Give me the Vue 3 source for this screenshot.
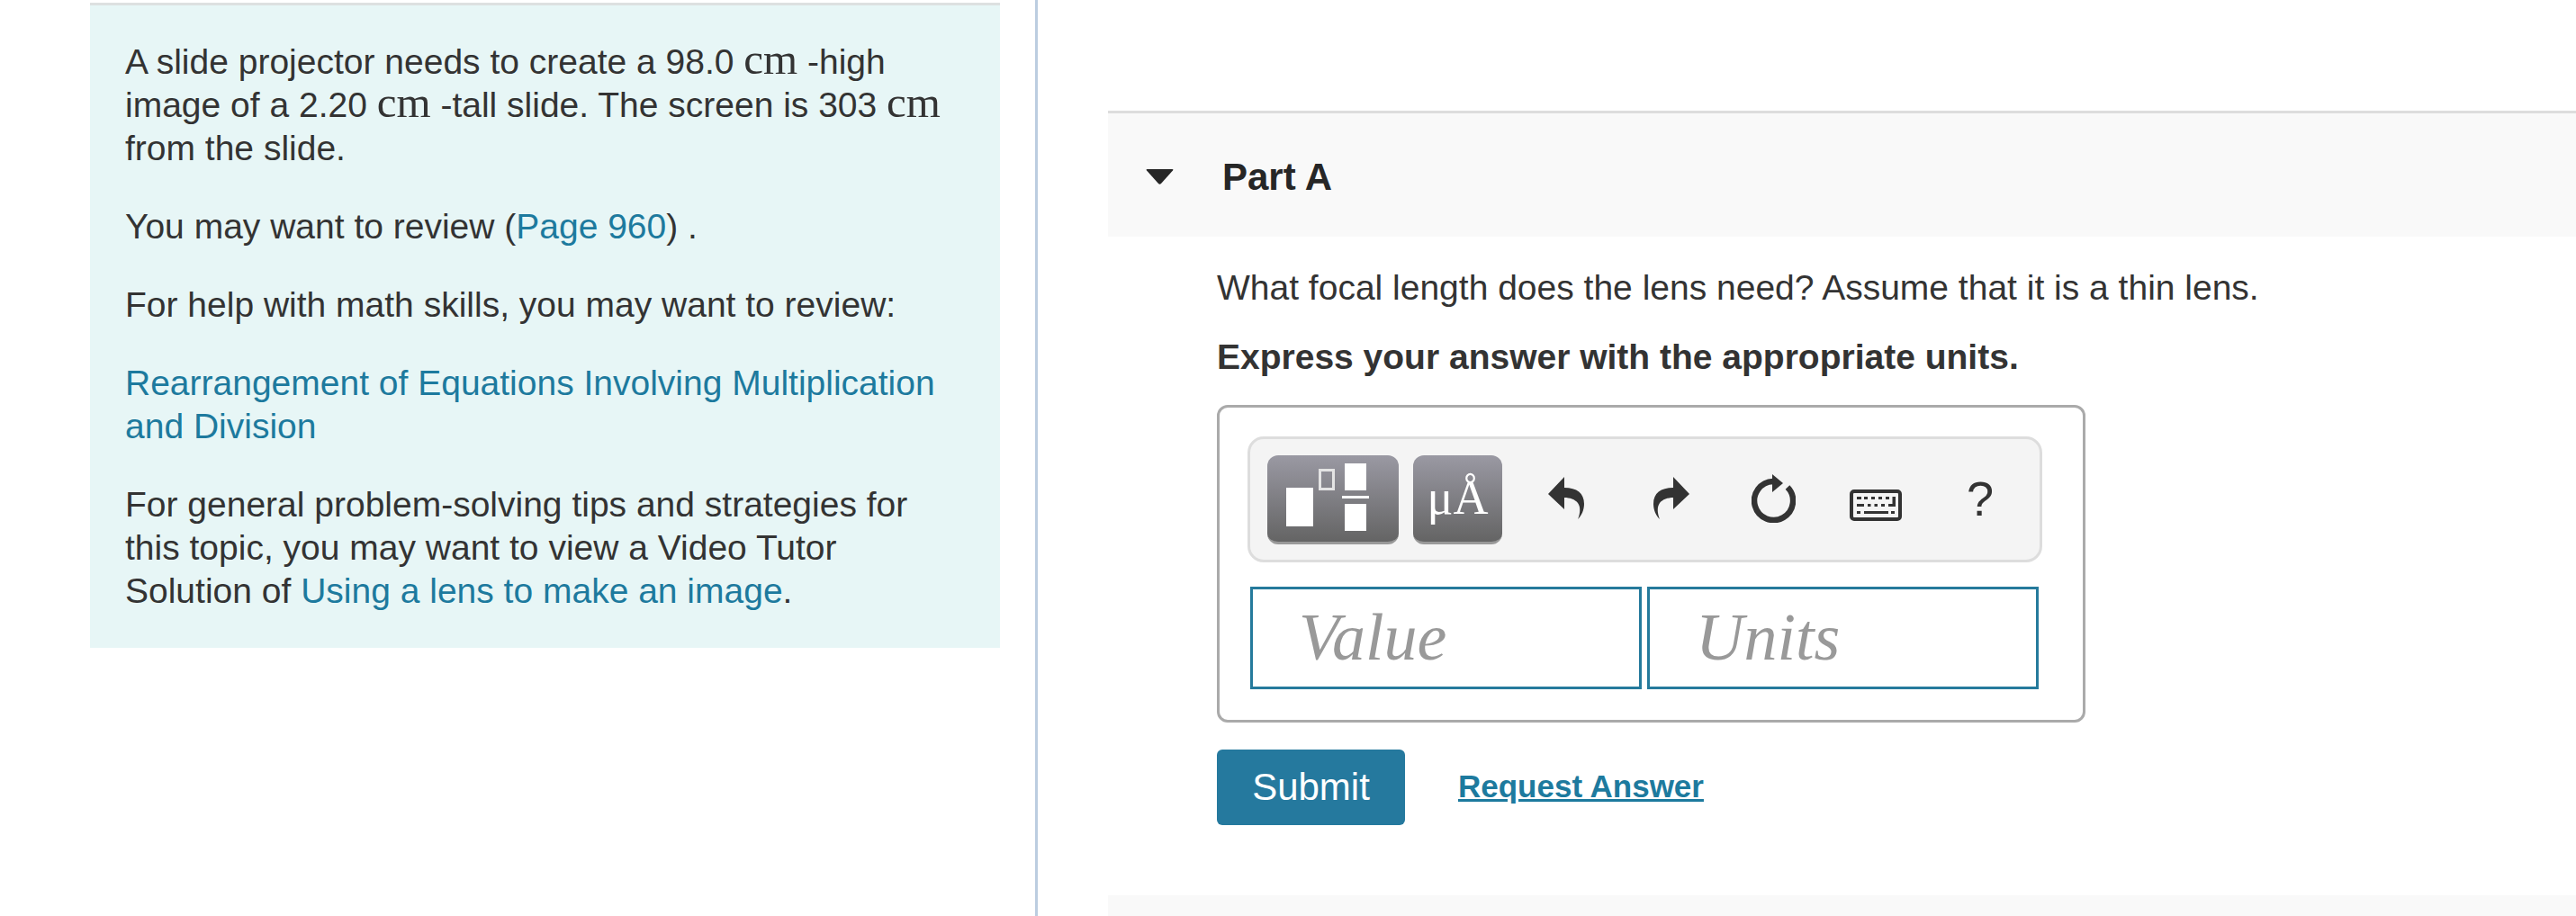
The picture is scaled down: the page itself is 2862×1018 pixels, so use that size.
<script setup>
const rows = [
  [8, 8, 5, 3], [16, 8, 4, 3], [24, 8, 4, 3], [32, 8, 4, 3], [40, 8, 4, 3],
  [8, 16, 8, 3], [20, 16, 3.5, 3], [27.5, 16, 3.5, 3], [35, 16, 4, 3], [43, 16, 8, 3], [47.5, 8, 3.5, 11],
  [8, 24, 4, 3], [16, 24, 27, 3], [46, 24, 4, 3]
]
</script>

<template>
  <div class="page">
    <aside class="left-col">
      <div class="intro">
        <p>A slide projector needs to create a 98.0 <span class="unit">cm</span> -high image of a 2.20 <span class="unit">cm</span> -tall slide. The screen is 303 <span class="unit">cm</span> from the slide.</p>
        <p>You may want to review (<a href="#">Page 960</a>) .</p>
        <p>For help with math skills, you may want to review:</p>
        <p><a href="#">Rearrangement of Equations Involving Multiplication and Division</a></p>
        <p>For general problem-solving tips and strategies for this topic, you may want to view a Video Tutor Solution of <a href="#">Using a lens to make an image</a>.</p>
      </div>
    </aside>

    <main class="right-col">
      <header class="part-head">
        <svg class="caret" viewBox="0 0 31 17"><path d="M1.5 0H29.5Q31 0 30 1.5L17 16Q15.500 17.500 14 16L1 1.500Q0 0 1.500 0Z" /></svg>
        <h2>Part A</h2>
      </header>

      <section class="part-body">
        <p class="question">What focal length does the lens need? Assume that it is a thin lens.</p>
        <p class="hint">Express your answer with the appropriate units.</p>

        <div class="answer-box">
          <div class="toolbar">
            <button class="tpl tpl-math">
              <span class="big-box"></span>
              <span class="sup-box"></span>
              <span class="frac">
                <span></span>
                <i></i>
                <span></span>
              </span>
            </button>
            <button class="tpl tpl-units">μÅ</button>

            <svg class="ic undo" viewBox="0 0 40 47"><path d="M0 19L18 0V12C32 12 40 18 40 30C40 37 37 43 33 47C36 40 36 33 33 29C30 25 24 23 18 23V36Z" /></svg>
            <svg class="ic redo" viewBox="0 0 40 47"><path d="M40 19L22 0V12C8 12 0 18 0 30C0 37 3 43 7 47C4 40 4 33 7 29C10 25 16 23 22 23V36Z" /></svg>
            <svg class="ic reset" viewBox="0 0 49 54">
              <path class="ring" d="M24 8A21.500 21.500 0 1 0 40 14.500" />
              <path d="M23 0L35 10L23 20Z" />
            </svg>
            <svg class="ic keys" viewBox="0 0 58 35">
              <rect class="ring" x="2" y="2" width="54" height="31" rx="3" />
              <rect v-for="(r, i) in rows" :key="i" :x="r[0]" :y="r[1]" :width="r[2]" :height="r[3]" />
            </svg>
            <span class="help">?</span>
          </div>

          <div class="inputs">
            <div class="field">Value</div>
            <div class="field">Units</div>
          </div>
        </div>

        <div class="actions">
          <button class="submit">Submit</button>
          <a href="#" class="request">Request Answer</a>
        </div>
      </section>

      <div class="next-part"></div>
    </main>
  </div>
</template>

<style>
html, body {
  margin: 0;
  overflow: hidden;
  background: #fff;
}
</style>

<style scoped>
.page {
  display: flex;
  width: 2862px;
  height: 1018px;
  font-family: "Liberation Sans", Arial, sans-serif;
  font-size: 39px;
  line-height: 48px;
  color: #333;
}

.left-col {
  width: 1150px;
  box-sizing: content-box;
  border-right: 3px solid #bccde0;
  padding-top: 3px;
  flex-shrink: 0;
}

.intro {
  width: 1011px;
  height: 717px;
  box-sizing: border-box;
  margin-left: 100px;
  padding: 39px 39px 0;
  background: #e7f6f6;
  border-top: 3px solid #dde0e0;
}

.intro p {
  margin: 0 0 39px;
}

.unit {
  font-family: "Liberation Serif", serif;
  font-size: 49px;
  line-height: 0;
}

a {
  color: #1d7a9e;
  text-decoration: none;
}

.right-col {
  flex: 1;
  padding: 123px 0 0 78px;
  display: flex;
  flex-direction: column;
}

.part-head {
  height: 140px;
  box-sizing: border-box;
  border-top: 3px solid #ddd;
  background: #f9f9f9;
  display: flex;
  align-items: center;
  padding: 4px 0 0 42px;
}

.caret {
  width: 31px;
  height: 17px;
  fill: #262626;
  margin-right: 54px;
}

.part-head h2 {
  margin: 0;
  font-size: 42px;
  font-weight: 700;
  color: #262626;
}

.part-body {
  padding: 33px 0 0 121px;
}

.question {
  margin: 0 0 29px;
}

.hint {
  margin: 0;
  font-weight: 700;
}

.answer-box {
  width: 965px;
  height: 353px;
  box-sizing: border-box;
  margin-top: 29px;
  border: 3px solid #aaa;
  border-radius: 12px;
  padding: 32px 0 0 31px;
}

.toolbar {
  width: 883px;
  height: 140px;
  box-sizing: border-box;
  display: flex;
  align-items: flex-start;
  background: #f4f4f4;
  border: 3px solid #ddd;
  border-radius: 18px;
  padding: 18px 0 0 19px;
}

.tpl {
  height: 99px;
  box-sizing: border-box;
  padding: 0;
  border: none;
  border-bottom: 3px solid #999;
  border-radius: 12px;
  background: linear-gradient(#9a99a3, #646464);
  color: #fff;
  flex-shrink: 0;
}

.tpl-math {
  width: 146px;
  display: flex;
  margin-right: 16px;
}

.big-box {
  width: 30px;
  height: 43px;
  background: #fff;
  margin: 36px 6px 0 21px;
}

.sup-box {
  width: 18px;
  height: 24px;
  box-sizing: border-box;
  border: 3px solid #e4e4e4;
  margin: 15px 8px 0 0;
}

.frac {
  width: 30px;
  display: flex;
  flex-direction: column;
  align-items: center;
  padding-top: 9px;
}

.frac span {
  width: 24px;
  height: 30px;
  background: #fff;
}

.frac i {
  width: 30px;
  height: 3px;
  background: #fff;
  margin: 6px 0;
}

.tpl-units {
  width: 99px;
  font-family: "Liberation Serif", serif;
  font-size: 54px;
  line-height: 54px;
  padding: 0 0 2px;
}

.ic {
  fill: #333;
  flex-shrink: 0;
}

.ring {
  fill: none;
  stroke: #333;
}

.undo {
  width: 40px;
  height: 47px;
  margin: 24px 0 0 51px;
}

.redo {
  width: 40px;
  height: 47px;
  margin: 24px 0 0 77px;
}

.reset {
  width: 49px;
  height: 54px;
  margin: 21px 0 0 69px;
}

.reset .ring {
  stroke-width: 6.5;
}

.keys {
  width: 58px;
  height: 35px;
  margin: 38px 0 0 60px;
}

.keys .ring {
  stroke-width: 4;
}

.help {
  margin: 19px 0 0 72px;
  font-size: 54px;
  line-height: 58px;
  color: #333;
}

.inputs {
  display: flex;
  gap: 6px;
  margin: 27px 0 0 3px;
}

.field {
  width: 435px;
  height: 114px;
  box-sizing: border-box;
  border: 3px solid #257a9c;
  padding-left: 51px;
  font-family: "Liberation Serif", serif;
  font-style: italic;
  font-size: 74px;
  line-height: 107px;
  color: #999;
}

.actions {
  display: flex;
  align-items: center;
  margin-top: 30px;
}

.submit {
  width: 209px;
  height: 84px;
  border: none;
  border-radius: 6px;
  background: #25799e;
  color: #fff;
  font-family: inherit;
  font-size: 42px;
  padding: 0;
}

.request {
  margin: 0 0 2px 59px;
  font-size: 35px;
  font-weight: 700;
  text-decoration: underline;
}

.next-part {
  height: 23px;
  margin-top: 78px;
  background: #f9f9f9;
}
</style>
